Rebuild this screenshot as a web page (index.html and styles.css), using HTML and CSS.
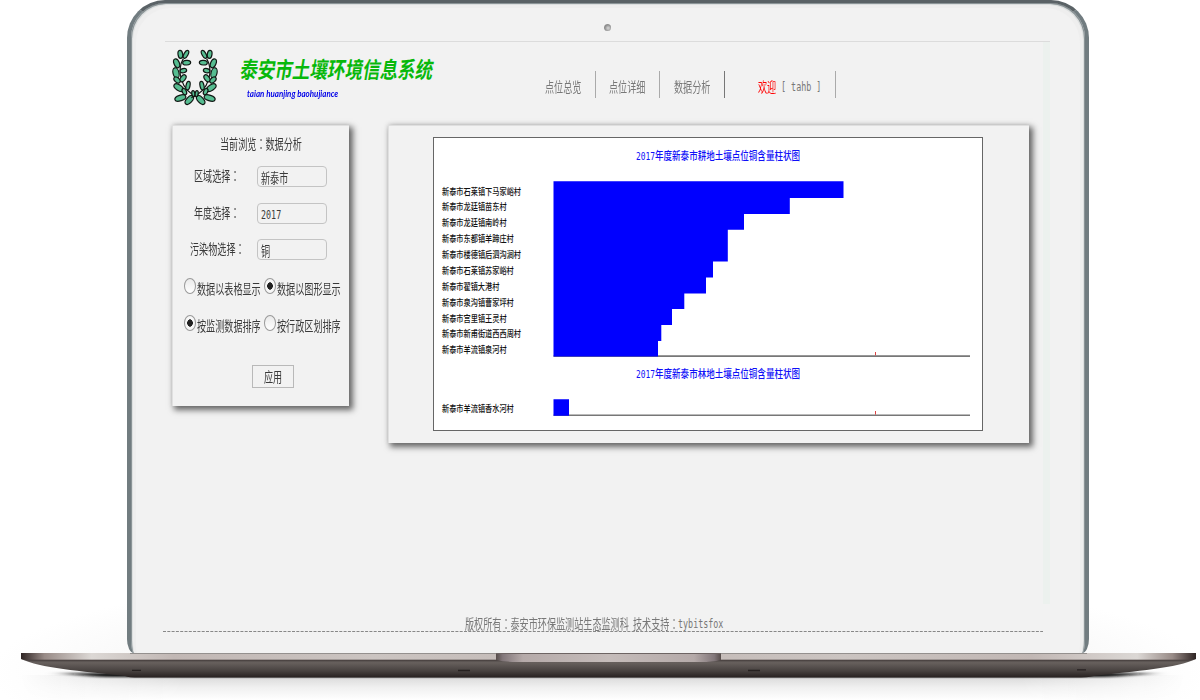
FILE: index.html
```html
<!DOCTYPE html>
<html lang="zh-CN">
<head>
<meta charset="utf-8">
<title>泰安市土壤环境信息系统</title>
<link rel="stylesheet" href="styles.css">
</head>
<body>
<div class="laptop">
  <div class="lid">
    <div class="camera"></div>
    <div class="screen">
      <div class="page">
        <header class="header">
          <svg class="wreath" viewBox="0 0 180 198">
            <defs>
              <g id="branch">
                <path d="M55 50 C36 82 43 145 101 167" fill="none"/>
                <ellipse cx="46" cy="37" rx="7" ry="12" transform="rotate(-8 46 37)"/>
                <ellipse cx="63" cy="37" rx="6" ry="13" transform="rotate(28 63 37)"/>
                <ellipse cx="35" cy="64" rx="8" ry="14" transform="rotate(-22 35 64)"/>
                <ellipse cx="65" cy="62" rx="7" ry="12" transform="rotate(86 65 62)"/>
                <ellipse cx="33" cy="93" rx="9" ry="16" transform="rotate(-14 33 93)"/>
                <ellipse cx="55" cy="86" rx="6.5" ry="10" transform="rotate(78 55 86)"/>
                <ellipse cx="54" cy="109" rx="7" ry="12" transform="rotate(38 54 109)"/>
                <ellipse cx="36" cy="114" rx="7" ry="11" transform="rotate(-45 36 114)"/>
                <ellipse cx="41" cy="137" rx="8.5" ry="16" transform="rotate(-56 41 137)"/>
                <ellipse cx="69" cy="131" rx="6" ry="13" transform="rotate(12 69 131)"/>
                <ellipse cx="58" cy="149" rx="6" ry="10" transform="rotate(-25 58 149)"/>
                <ellipse cx="46" cy="168" rx="8.5" ry="17" transform="rotate(72 46 168)"/>
                <ellipse cx="73" cy="174" rx="8.5" ry="16" transform="rotate(42 73 174)"/>
                <ellipse cx="85" cy="155" rx="4.5" ry="9" transform="rotate(-10 85 155)"/>
              </g>
            </defs>
            <use href="#branch"/>
            <use href="#branch" transform="translate(180 0) scale(-1 1)"/>
          </svg>
          <div class="brand">
            <div class="brand-name">泰安市土壤环境信息系统</div>
            <div class="brand-sub">taian huanjing baohujiance</div>
          </div>
          <nav class="nav">
            <a class="nav-item"><span class="t n4">点位总览</span></a>
            <a class="nav-item"><span class="t n4">点位详细</span></a>
            <a class="nav-item nav-dark"><span class="t n4">数据分析</span></a>
            <div class="nav-item welcome"><span class="t n2 red">欢迎</span><span class="m m8">[ tahb ]</span></div>
          </nav>
        </header>
        <main class="main">
          <form class="card filter">
            <div class="crumb"><span class="t n9">当前浏览<span class="colon" lang="zh-TW">：</span>数据分析</span></div>
            <div class="field"><span class="label"><span class="t n5">区域选择<span class="colon" lang="zh-TW">：</span></span></span><span class="input"><span class="t n3">新泰市</span></span></div>
            <div class="field"><span class="label"><span class="t n5">年度选择<span class="colon" lang="zh-TW">：</span></span></span><span class="input num-input"><span class="m m4">2017</span></span></div>
            <div class="field"><span class="label wide"><span class="t n6">污染物选择<span class="colon" lang="zh-TW">：</span></span></span><span class="input"><span class="t n1">铜</span></span></div>
            <div class="radios first"><i class="radio"></i><span class="t n7">数据以表格显示</span><i class="radio on"></i><span class="t n7">数据以图形显示</span></div>
            <div class="radios"><i class="radio on"></i><span class="t n7">按监测数据排序</span><i class="radio"></i><span class="t n7">按行政区划排序</span></div>
            <div class="apply"><span class="t n2">应用</span></div>
          </form>
          <section class="card result">
            <svg class="chart" viewBox="433 137 550 294" width="550" height="294">
              <rect class="frame" x="433.5" y="137.5" width="549" height="293"/>
              <g class="title">
                <text x="636" y="160" textLength="164" lengthAdjust="spacingAndGlyphs"><tspan class="num">2017</tspan>年度新泰市耕地土壤点位铜含量柱状图</text>
                <text x="636" y="377.6" textLength="164" lengthAdjust="spacingAndGlyphs"><tspan class="num">2017</tspan>年度新泰市林地土壤点位铜含量柱状图</text>
              </g>
              <path class="axis" d="M553.5 356.1H970M553.5 415.3H970"/>
              <path class="tick" d="M875.5 352V355.4M875.5 411V414.6"/>
              <path class="bars" d="M553.5 181.3H843.5V198H789.8V214H744V229.8H727.8V261.5H713V277.5H706V293.5H684.3V309H672V325H661.3V341H658V356.6H553.5ZM553.5 399.3H569V415.8H553.5Z"/>
              <g class="places">
                <text x="442" y="194.5" textLength="79" lengthAdjust="spacingAndGlyphs">新泰市石莱镇下马家峪村</text>
                <text x="442" y="210.4" textLength="64.6" lengthAdjust="spacingAndGlyphs">新泰市龙廷镇苗东村</text>
                <text x="442" y="226.3" textLength="64.6" lengthAdjust="spacingAndGlyphs">新泰市龙廷镇南岭村</text>
                <text x="442" y="242.1" textLength="71.8" lengthAdjust="spacingAndGlyphs">新泰市东都镇羊蹄庄村</text>
                <text x="442" y="258" textLength="79" lengthAdjust="spacingAndGlyphs">新泰市楼德镇后泗沟涧村</text>
                <text x="442" y="273.9" textLength="71.8" lengthAdjust="spacingAndGlyphs">新泰市石莱镇苏家峪村</text>
                <text x="442" y="289.7" textLength="57.4" lengthAdjust="spacingAndGlyphs">新泰市翟镇大港村</text>
                <text x="442" y="305.6" textLength="71.8" lengthAdjust="spacingAndGlyphs">新泰市泉沟镇曹家坪村</text>
                <text x="442" y="321.5" textLength="64.6" lengthAdjust="spacingAndGlyphs">新泰市宫里镇王灵村</text>
                <text x="442" y="337.4" textLength="79" lengthAdjust="spacingAndGlyphs">新泰市新甫街道西西周村</text>
                <text x="442" y="353.2" textLength="64.6" lengthAdjust="spacingAndGlyphs">新泰市羊流镇泉河村</text>
                <text x="442" y="412.3" textLength="71.8" lengthAdjust="spacingAndGlyphs">新泰市羊流镇香水河村</text>
              </g>
            </svg>
          </section>
        </main>
        <footer class="footer"><span class="t n18">版权所有<span class="colon" lang="zh-TW">：</span>泰安市环保监测站生态监测科</span><span class="t n5 tech">技术支持<span class="colon" lang="zh-TW">：</span></span><span class="m m9">tybitsfox</span></footer>
        <svg class="rule" width="880" height="2"><path d="M0 .5H880"/></svg>
      </div>
      <div class="strip"></div>
    </div>
  </div>
  <svg class="base" width="1200" height="47" viewBox="0 653 1200 47">
    <defs>
      <linearGradient id="deck"><stop offset="0" stop-color="#2e2423"/><stop offset=".02" stop-color="#988b87"/><stop offset=".06" stop-color="#dcd8d5"/><stop offset=".13" stop-color="#c1b7b4"/><stop offset=".3" stop-color="#cbc4c1"/><stop offset=".5" stop-color="#c1b7b4"/><stop offset=".7" stop-color="#cbc4c1"/><stop offset=".86" stop-color="#c1b7b4"/><stop offset=".95" stop-color="#dcd8d5"/><stop offset=".98" stop-color="#988b87"/><stop offset="1" stop-color="#2e2423"/></linearGradient>
      <linearGradient id="belly" x2="0" y2="1"><stop offset="0" stop-color="#453f3d"/><stop offset=".2" stop-color="#67605d"/><stop offset=".65" stop-color="#47413f"/><stop offset="1" stop-color="#272120"/></linearGradient>
      <linearGradient id="notch"><stop offset="0" stop-color="#574d4b"/><stop offset=".03" stop-color="#82777a"/><stop offset=".12" stop-color="#b5aaa9"/><stop offset=".5" stop-color="#c5bcba"/><stop offset=".88" stop-color="#b5aaa9"/><stop offset=".97" stop-color="#82777a"/><stop offset="1" stop-color="#574d4b"/></linearGradient>
      <linearGradient id="floor" x2="0" y2="1"><stop offset="0" stop-color="#d6d6d6"/><stop offset=".5" stop-color="#f0f0f0"/><stop offset="1" stop-color="#fff"/></linearGradient>
      <linearGradient id="fade"><stop offset="0" stop-color="#000"/><stop offset=".14" stop-color="#fff"/><stop offset=".86" stop-color="#fff"/><stop offset="1" stop-color="#000"/></linearGradient>
      <mask id="sides"><rect x="20" y="653" width="1165" height="47" fill="url(#fade)"/></mask>
      <filter id="soft" x="-20%" y="-100%" width="140%" height="300%"><feGaussianBlur stdDeviation="9 1.2"/></filter>
    </defs>
    <rect x="20" y="675" width="1165" height="25" fill="url(#floor)" mask="url(#sides)"/>
    <path d="M60 673H1155L1110 677H100Z" fill="#111" filter="url(#soft)"/>
    <path d="M21 659C40 668 80 671 125 676Q128 677.5 140 677.5H1075Q1088 677.5 1094 676C1135 671 1178 668 1196 659Z" fill="url(#belly)"/>
    <path d="M21 653H1196V659L1190 660H27L21 659Z" fill="url(#deck)"/>
    <path d="M130 653.5H1087" stroke="#94908e"/>
    <path d="M27 660.2H1190" stroke="#4a4240"/>
    <path d="M496 653H721V660Q713 662 700 662H517Q504 662 496 660Z" fill="url(#notch)"/>
    <path d="M496 653.5H721" stroke="#6d6463"/>
    <path d="M132 670.3H141M458 670.5H470M748 670.5H760M1077 669.8H1086" stroke="#262120" stroke-width="1.3"/>
  </svg>
</div>
</body>
</html>
```

FILE: styles.css
```css
* { box-sizing: border-box; }
body { margin: 0; background: #fff; font-family: "Noto Sans CJK SC", sans-serif; font-size: 13.5px; line-height: 20px; color: #3a3a3a; overflow: hidden; }
.laptop { width: 1200px; height: 700px; display: flex; flex-direction: column; background: radial-gradient(ellipse 610px 110px at 50% 96%, #f7f7f7 70%, #fff 100%); }
.lid { width: 962px; height: 653px; margin-left: 127px; flex: none; padding: 20px 31px 0 31px; background: #f2f2f2; border: 4px solid #717c80; border-top: 3px solid #5a6266; border-bottom: 0; border-radius: 38px 38px 7px 7px / 38px 38px 14px 14px; box-shadow: inset 1px 1px 0 0 #8b9497, inset -1px 1px 0 0 #8b9497, inset 2px 2px 0 0 #dcdfdf, inset -2px 2px 0 0 #dcdfdf, inset 5px 5px 0 0 #eee, inset -5px 5px 0 0 #eee; }
.camera { width: 7px; height: 7px; margin: 0 0 14px 443px; border-radius: 50%; background: radial-gradient(circle at 60% 60%, #c9c9c9 15%, #888 60%, #c4c4c4); transform: translate(-1px, 1px); }
.screen { display: flex; width: 888px; height: 609px; margin-top: -3px; background: linear-gradient(#dcdcdc, #dcdcdc) 3px 0 / 885px 1px no-repeat; }
.page { width: 881px; padding: 1px 0 0 1px; }
.strip { width: 7px; height: 562px; margin-top: 1px; background: #ecf1ee; }

/* Condensed text: each box has the width of the narrowed glyphs */
.t, .m { display: inline-block; flex: none; white-space: nowrap; transform-origin: 0 50%; }
.t { transform: scaleX(.674); }
.m { font-family: "DejaVu Sans Mono", monospace; font-size: 12.5px; transform: translateY(1px) scaleX(.67); white-space: pre; }
.colon { font-family: "Noto Sans CJK TC", sans-serif; }
.n1 { width: 9.1px; } .n2 { width: 18.2px; } .n3 { width: 27.3px; } .n4 { width: 36.4px; } .n5 { width: 45.5px; }
.n6 { width: 54.6px; } .n7 { width: 63.7px; } .n9 { width: 81.9px; } .n18 { width: 163.8px; }
.m4 { width: 20px; } .m8 { width: 40px; } .m9 { width: 45px; }

.header { display: flex; height: 83px; }
.wreath { width: 60px; height: 66px; margin-left: 2px; flex: none; fill: #56bd91; stroke: #101713; stroke-width: 3.6; }
.brand { width: 280px; padding: 11px 0 0 16px; }
.brand-name { width: 196px; height: 30px; line-height: 30px; font-size: 22.5px; font-weight: 700; color: #08b80b; white-space: nowrap; transform-origin: 0 50%; transform: scaleX(.778) skewX(-12deg); }
.brand-sub { margin: 2px 0 0 6px; height: 18px; font: italic 700 9px/18px "Lato", sans-serif; color: #0000e8; white-space: nowrap; transform: scaleX(.885); transform-origin: 0 50%; }
.nav { display: flex; margin: 29px 0 0 26px; height: 27px; color: #777; }
.nav-item { display: flex; padding: 5px 14px 0 13.5px; width: 64.5px; border-right: 1px solid #aaa; }
.nav-dark { border-color: #777; }
.welcome { width: 111px; padding-left: 33px; gap: 5px; }
.red { color: #f00; }

.main { display: flex; gap: 39px; height: 489px; padding-left: 9px; align-items: flex-start; }
.card { background: #f2f2f2; border-top: 1px solid #dfdfdf; border-left: 1px solid #e0e0e0; box-shadow: 3px 3px 6px 1px #666, 0 -1px 4px #dedede; }
.filter { width: 177px; height: 281px; padding-top: 7px; }
.crumb { display: flex; height: 33px; padding-left: 47px; }
.field { display: flex; height: 36.5px; }
.label { width: 84px; padding-left: 21px; margin-top: -1px; }
.wide { padding-left: 17px; }
.input { width: 70px; height: 21px; padding: 0 0 0 3px; border: 1px solid #c4c4c4; border-radius: 4px; line-height: 20px; }
.num-input { line-height: 17px; }
.radios { display: flex; height: 37px; padding-left: 11px; }
.radios .t { margin: 0 3px 0 1.3px; }
.first { margin-top: 2.5px; }
.radio { flex: none; width: 12px; height: 16px; border: 1px solid #999; border-radius: 50%; background: linear-gradient(#eaeaea, #fff); }
.radio.on { background: radial-gradient(ellipse 3px 4px at center, #222 85%, #f7f7f7 100%); }
.apply { display: flex; justify-content: center; width: 42px; height: 23px; margin: 12.5px 0 0 79px; border: 1px solid #b9b9b9; }
.result { width: 641px; height: 318px; padding: 11px 0 0 44px; }
.chart { display: block; }
.frame { fill: #fff; stroke: #666; }
.title { fill: #0f0ff8; font-size: 10.8px; font-weight: 500; }
.num { font-family: "DejaVu Sans Mono", monospace; font-size: 10px; }
.axis { stroke: #777; stroke-width: 1.6; }
.tick { stroke: #d44; }
.bars { fill: #00f; }
.places { fill: #111; font-size: 9.5px; font-weight: 500; }

.footer { display: flex; height: 17px; padding-left: 302px; color: #777; align-items: center; }
.tech { margin-left: 4px; }
.rule { display: block; stroke: #888; stroke-dasharray: 3 1.3; }
.base { display: block; flex: none; }
```
